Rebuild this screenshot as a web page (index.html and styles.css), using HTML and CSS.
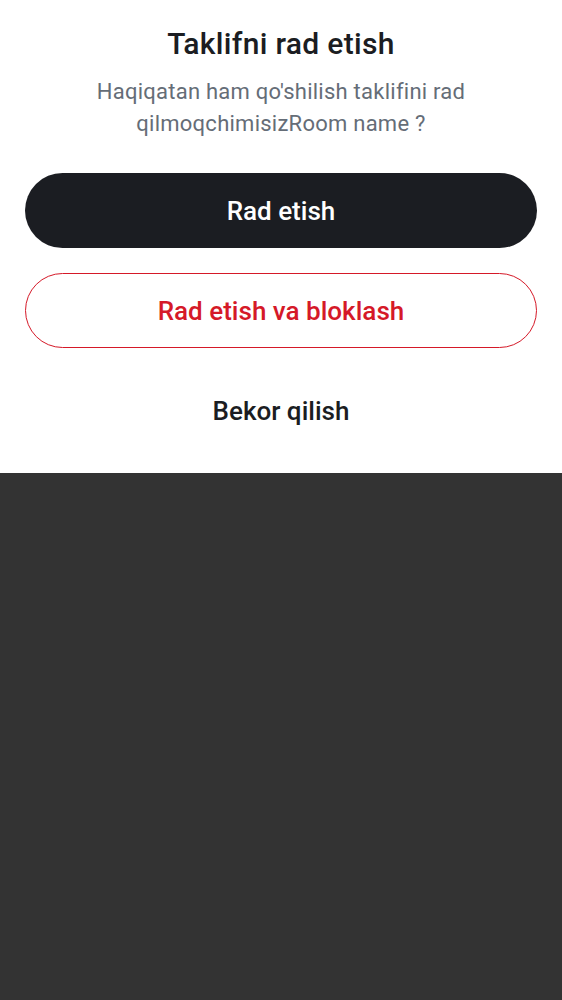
FILE: index.html
```html
<!DOCTYPE html>
<html lang="uz">
<head>
<meta charset="utf-8">
<link rel="stylesheet" href="styles.css">
</head>
<body>
<div class="sheet">
  <h1 class="title">Taklifni rad etish</h1>
  <p class="subtitle">Haqiqatan ham qo'shilish taklifini rad qilmoqchimisizRoom name ?</p>
  <div class="actions">
    <button class="btn btn-primary">Rad etish</button>
    <button class="btn btn-danger">Rad etish va bloklash</button>
    <button class="btn btn-plain">Bekor qilish</button>
  </div>
</div>
<div class="backdrop"></div>
</body>
</html>
```
FILE: styles.css
```css
html, body {
  margin: 0;
  padding: 0;
  height: 100%;
}
body {
  background: #333333;
  font-family: Roboto, "Noto Sans", sans-serif;
  display: flex;
  flex-direction: column;
}
.sheet {
  background: #ffffff;
  padding: 26px 25px 25px;
  display: flex;
  flex-direction: column;
  align-items: center;
}
.title {
  margin: 0;
  font-family: "Roboto Medium", Roboto, "Noto Sans", sans-serif;
  font-size: 30px;
  line-height: 36px;
  font-weight: 500;
  letter-spacing: 0.3px;
  color: #1b1d22;
  text-align: center;
}
.subtitle {
  margin: 14px 0 0;
  max-width: 440px;
  font-size: 22px;
  line-height: 32px;
  letter-spacing: 0.25px;
  color: #656d77;
  text-align: center;
}
.actions {
  align-self: stretch;
  margin-top: 33px;
  display: flex;
  flex-direction: column;
  gap: 25px;
}
.btn {
  height: 75px;
  border-radius: 38px;
  font-family: "Roboto Medium", Roboto, "Noto Sans", sans-serif;
  font-size: 26px;
  font-weight: 500;
  border: 1px solid transparent;
  background: transparent;
  padding: 0;
}
.btn-primary {
  background: #1b1d22;
  color: #ffffff;
}
.btn-danger {
  border-color: #d51928;
  color: #d51928;
}
.btn-plain {
  color: #1b1d22;
}
.backdrop {
  flex: 1;
  background: #333333;
}
```
